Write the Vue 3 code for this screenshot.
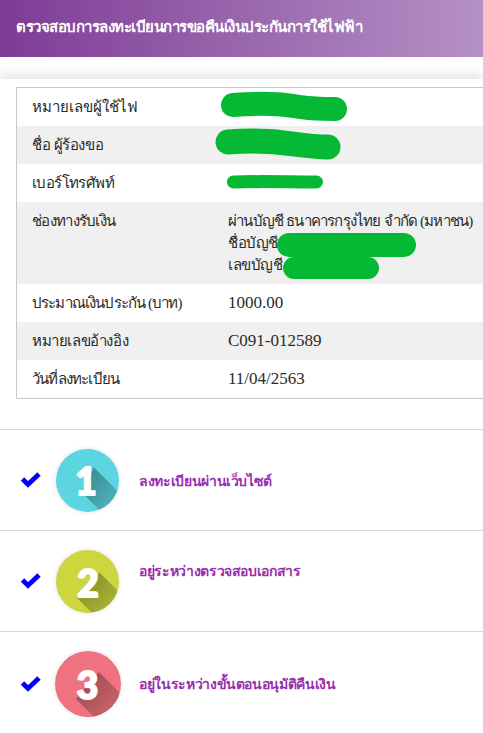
<template>
  <div class="page">
    <header class="topbar">ตรวจสอบการลงทะเบียนการขอคืนเงินประกันการใช้ไฟฟ้า</header>

    <section class="panel">
      <div class="info-table">
        <div class="row" v-for="(r, i) in rows" :key="i" :class="{ odd: i % 2 === 1 }">
          <div class="label" :style="{ letterSpacing: r.track + 'px' }">{{ r.label }}</div>
          <div class="value" :class="{ num: r.num }">
            <template v-if="r.lines">
              <div v-for="(line, k) in r.lines" :key="line" :class="{ long: k === 0 }">{{ line }}</div>
            </template>
            <template v-else>{{ r.value }}</template>
            <svg
              v-for="(s, j) in r.scribbles"
              :key="j"
              class="scribble"
              width="300"
              height="82"
              viewBox="0 0 300 82"
            >
              <path :d="s.d" :stroke-width="s.w" fill="none" stroke="#05b935" stroke-linecap="round" stroke-linejoin="round" />
            </svg>
          </div>
        </div>
      </div>
    </section>

    <section class="steps">
      <div class="step" v-for="s in steps" :key="s.n" :class="'step-' + s.n">
        <svg class="check" width="22" height="17" viewBox="0 0 22 17">
          <path d="M2.5 8 L8 13.5 L19 3" fill="none" stroke="#0000ff" stroke-width="4.8" stroke-linejoin="miter" />
        </svg>
        <svg class="badge" :width="s.size + 12" :height="s.size + 12" :viewBox="`0 0 ${s.size + 12} ${s.size + 12}`">
          <defs>
            <clipPath :id="'clip' + s.n">
              <circle :cx="s.size / 2 + 6" :cy="s.size / 2 + 6" :r="s.size / 2" />
            </clipPath>
            <linearGradient :id="'fade' + s.n" x1="0.1" y1="0.1" x2="0.9" y2="0.9">
              <stop offset="0" stop-color="#000" stop-opacity="0.34" />
              <stop offset="1" stop-color="#000" stop-opacity="0.03" />
            </linearGradient>
            <filter :id="'soft' + s.n" x="-20%" y="-20%" width="140%" height="140%">
              <feGaussianBlur stdDeviation="2" />
            </filter>
          </defs>
          <circle :cx="s.size / 2 + 6" :cy="s.size / 2 + 6" :r="s.size / 2 + 1" fill="#000" opacity="0.08" :filter="`url(#soft${s.n})`" />
          <circle :cx="s.size / 2 + 6" :cy="s.size / 2 + 6" :r="s.size / 2" :fill="s.color" />
          <polygon :points="s.shadow" :fill="`url(#fade${s.n})`" :clip-path="`url(#clip${s.n})`" />
          <text :x="s.tx" :y="s.ty" text-anchor="middle" class="digit">{{ s.n }}</text>
        </svg>
        <div class="step-text">{{ s.text }}</div>
      </div>
    </section>
  </div>
</template>

<script setup>
const rows = [
  {
    label: 'หมายเลขผู้ใช้ไฟ',
    track: 0,
    value: '',
    scribbles: [{ d: 'M5 17 C30 15 55 16 72 19 C85 21 97 21 107 21', w: 24 }]
  },
  {
    label: 'ชื่อ ผู้ร้องขอ',
    track: -0.4,
    value: '',
    scribbles: [{ d: 'M0 16 C25 14 45 15 65 18 C80 20 90 21 100 21', w: 25 }]
  },
  {
    label: 'เบอร์โทรศัพท์',
    track: -0.6,
    value: '',
    scribbles: [{ d: 'M5.5 18 C35 17 60 18 88.5 18', w: 13 }]
  },
  {
    label: 'ช่องทางรับเงิน',
    track: -0.7,
    lines: ['ผ่านบัญชี ธนาคารกรุงไทย จำกัด (มหาชน)', 'ชื่อบัญชี', 'เลขบัญชี'],
    scribbles: [
      { d: 'M61 43 L176 43', w: 24 },
      { d: 'M66 66 L140 66', w: 22 }
    ]
  },
  { label: 'ประมาณเงินประกัน (บาท)', track: -0.85, value: '1000.00', num: true },
  { label: 'หมายเลขอ้างอิง', track: -0.4, value: 'C091-012589', num: true },
  { label: 'วันที่ลงทะเบียน', track: -0.8, value: '11/04/2563', num: true }
]

const steps = [
  { n: 1, size: 63, color: '#5bd5e0', tx: 36, ty: 51.5, text: 'ลงทะเบียนผ่านเว็บไซต์', shadow: '43.5,24 83.5,64 74.5,92 34.5,52' },
  { n: 2, size: 63, color: '#cdd63f', tx: 38, ty: 53, text: 'อยู่ระหว่างตรวจสอบเอกสาร', shadow: '49.5,28.5 89.5,68.5 66.5,93.5 26.5,53.5' },
  { n: 3, size: 66, color: '#ee737e', tx: 38.5, ty: 53.5, text: 'อยู่ในระหว่างขั้นตอนอนุมัติคืนเงิน', shadow: '50,27 90,67 67,94 27,54' }
]
</script>

<style scoped>
.page {
  width: 483px;
  height: 733px;
  overflow: hidden;
  background: #fff;
  font-family: "Liberation Serif", "Noto Sans", serif;
}

.topbar {
  height: 57px;
  box-sizing: border-box;
  padding: 17px 16px 0;
  background: linear-gradient(to right, #7e3b96, #b591c5);
  color: #fff;
  font-family: "Liberation Sans", "Noto Sans", sans-serif;
  font-size: 15px;
  font-weight: 700;
  letter-spacing: -0.5px;
  line-height: 20px;
  white-space: nowrap;
}

.panel {
  margin-top: 22px;
  padding: 8px 0 30px 16px;
  box-shadow: 0 -6px 9px rgba(0, 0, 0, 0.09);
}

.info-table {
  width: 520px;
  border: 1px solid #c8c8c8;
}

.row {
  display: flex;
  min-height: 38px;
  font-size: 15px;
  letter-spacing: -0.4px;
  line-height: 22px;
  color: #2a2a2a;
  white-space: nowrap;
}

.row.odd {
  background: #f0f0f0;
}

.label {
  width: 211px;
  box-sizing: border-box;
  padding: 8px 0 0 15px;
}

.value {
  position: relative;
  flex: 1;
  padding: 8px 0;
}

.value.num {
  font-size: 17px;
  letter-spacing: 0;
}

.long {
  letter-spacing: -0.8px;
}

.scribble {
  position: absolute;
  left: 0;
  top: 0;
  overflow: visible;
}

.steps {
  position: relative;
  display: flex;
  flex-direction: column;
  background: #fff;
}

.step {
  display: flex;
  align-items: flex-start;
  height: 101px;
  box-sizing: border-box;
  border-top: 1px solid #d8d8d8;
  padding-left: 20px;
}

.check {
  flex: none;
  margin-top: 41px;
}

.badge {
  flex: none;
  margin: 13px 0 0 8px;
}

.step-text {
  margin: 41px 0 0 14px;
  color: #9b2fae;
  font-family: "Liberation Sans", "Noto Sans", sans-serif;
  font-size: 14px;
  font-weight: 700;
  letter-spacing: -0.35px;
  line-height: 20px;
  white-space: nowrap;
}

.step-2 .step-text {
  margin-top: 30px;
}

.step-3 .step-text {
  margin-top: 42px;
  margin-left: 12px;
}

.step-3 .check {
  margin-top: 43px;
}

.step-3 .badge {
  margin-left: 7px;
}

.digit {
  fill: #fff;
  stroke: #fff;
  stroke-width: 2;
  font-family: Lato, Roboto, sans-serif;
  font-size: 37px;
  font-weight: 900;
}
</style>
